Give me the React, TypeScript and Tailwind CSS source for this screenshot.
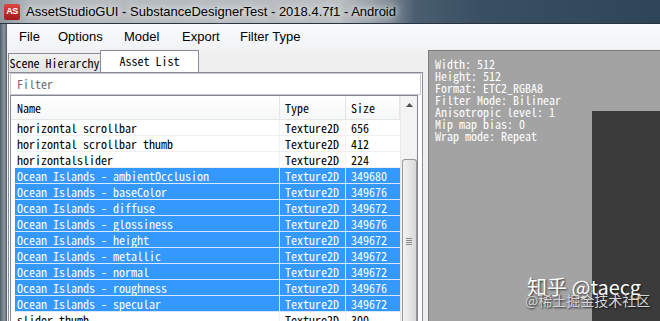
import React from "react";

const rows = [
  { n: "horizontal scrollbar", t: "Texture2D", s: "656", sel: false },
  { n: "horizontal scrollbar thumb", t: "Texture2D", s: "412", sel: false },
  { n: "horizontalslider", t: "Texture2D", s: "224", sel: false },
  { n: "Ocean Islands - ambientOcclusion", t: "Texture2D", s: "349680", sel: true },
  { n: "Ocean Islands - baseColor", t: "Texture2D", s: "349676", sel: true },
  { n: "Ocean Islands - diffuse", t: "Texture2D", s: "349672", sel: true },
  { n: "Ocean Islands - glossiness", t: "Texture2D", s: "349676", sel: true },
  { n: "Ocean Islands - height", t: "Texture2D", s: "349672", sel: true },
  { n: "Ocean Islands - metallic", t: "Texture2D", s: "349672", sel: true },
  { n: "Ocean Islands - normal", t: "Texture2D", s: "349672", sel: true },
  { n: "Ocean Islands - roughness", t: "Texture2D", s: "349676", sel: true },
  { n: "Ocean Islands - specular", t: "Texture2D", s: "349672", sel: true },
  { n: "slider thumb", t: "Texture2D", s: "300", sel: false },
];

const info = [
  "Width: 512",
  "Height: 512",
  "Format: ETC2_RGBA8",
  "Filter Mode: Bilinear",
  "Anisotropic level: 1",
  "Mip map bias: 0",
  "Wrap mode: Repeat",
];

const mono = "font-['Noto_Sans_Mono_CJK_SC','Liberation_Mono',monospace] text-[12px] whitespace-pre";

function Row({ n, t, s, sel }: { n: string; t: string; s: string; sel: boolean }) {
  const cell = sel
    ? "bg-[#3399ff] border-[#d4e7fb] text-white"
    : "bg-white border-[#f0f0f0] text-black";
  return (
    <div className="flex h-[16px] shrink-0">
      <div className="w-[4px] shrink-0 bg-white" />
      <div className={`w-[265px] shrink-0 pl-[2px] border-r border-b leading-[15px] overflow-hidden ${cell}`}>{n}</div>
      <div className={`w-[66px] shrink-0 pl-[5px] border-r border-b leading-[15px] ${cell}`}>{t}</div>
      <div className={`w-[54px] shrink-0 pl-[5px] border-b leading-[15px] ${cell}`}>{s}</div>
    </div>
  );
}

export default function App() {
  return (
    <div className="relative w-[660px] h-[321px] overflow-hidden flex flex-col bg-[#f0f0f0] font-['Liberation_Sans',Arial,sans-serif]">
      {/* Title bar */}
      <div className="h-[24px] shrink-0 flex items-center border-b border-[#27333f] bg-[linear-gradient(to_right,#8f979f_0px,#b3b8bd_30px,#babec2_340px,#8a949e_385px,#4a5e70_415px,#3a4f61_480px,#2f4557_660px)]">
        <div className="ml-[4px] w-[16px] h-[16px] rounded-[2px] bg-[linear-gradient(to_bottom,#e0453f,#a3181c)] flex items-center justify-center text-white text-[9px] font-bold leading-none tracking-[-0.5px]">
          AS
        </div>
        <div className="ml-[6px] text-[13px] text-black leading-none [text-shadow:0_0_6px_#ffffff,0_0_10px_#e6e8ea]">
          AssetStudioGUI - SubstanceDesignerTest - 2018.4.7f1 - Android
        </div>
      </div>

      <div className="flex flex-1 min-h-0">
        {/* left window frame */}
        <div className="w-[7px] shrink-0 bg-[linear-gradient(to_right,#4f5a65_0px,#6f7a85_2px,#8c96a0_4px,#6a747e_6px,#4a545e_7px)]" />

        {/* client */}
        <div className="flex-1 flex flex-col min-w-0">
          {/* Menu bar */}
          <div className="h-[25px] shrink-0 flex items-center bg-[linear-gradient(to_bottom,#f9fafb,#f1f3f5)] text-[13px] text-black pl-[12px]">
            <span className="w-[39px]">File</span>
            <span className="w-[66px]">Options</span>
            <span className="w-[58px]">Model</span>
            <span className="w-[58px]">Export</span>
            <span>Filter Type</span>
          </div>

          {/* Body */}
          <div className="flex flex-1 min-h-0">
            {/* Tab control */}
            <div className="ml-[1px] w-[415px] shrink-0 flex flex-col">
              <div className="h-[23px] shrink-0 flex items-end">
                <div className={`h-[19px] w-[93px] border border-b-0 border-[#898c95] bg-[linear-gradient(to_bottom,#f2f2f2,#e3e3e3)] flex items-center justify-center text-black ${mono}`}>
                  Scene Hierarchy
                </div>
                <div className={`h-[22px] w-[99px] -ml-[1px] border border-b-0 border-[#898c95] bg-white flex items-center justify-center pb-[2px] text-black ${mono}`}>
                  Asset List
                </div>
              </div>
              <div className="flex-1 min-h-0 border border-b-0 border-[#898c95] bg-white px-[1px] flex flex-col">
                {/* Filter box */}
                <div className={`h-[22px] shrink-0 border border-[#c5c7cc] flex items-center pl-[6px] text-[#6d6d6d] ${mono}`}>
                  Filter
                </div>
                {/* List view */}
                <div className={`w-[408px] flex-1 min-h-0 border border-b-0 border-[#828790] flex ${mono}`}>
                  <div className="w-[389px] shrink-0 flex flex-col">
                    <div className="h-[24px] shrink-0 flex bg-[linear-gradient(to_bottom,#ffffff,#f6f7f8)] border-b border-[#e5e5e5] text-black">
                      <div className="w-[4px] shrink-0" />
                      <div className="w-[265px] shrink-0 pl-[2px] border-r border-[#e5e5e5] leading-[23px]">Name</div>
                      <div className="w-[66px] shrink-0 pl-[5px] border-r border-[#e5e5e5] leading-[23px]">Type</div>
                      <div className="w-[54px] shrink-0 pl-[5px] border-r border-[#e5e5e5] leading-[23px]">Size</div>
                    </div>
                    {rows.map((r) => (
                      <Row key={r.n} {...r} />
                    ))}
                  </div>
                  {/* Scrollbar */}
                  <div className="w-[17px] shrink-0 bg-[#f3f3f3] border-l border-[#e9e9e9] flex flex-col items-center">
                    <div className="h-[17px] shrink-0 w-full flex items-center justify-center pt-[1px]">
                      <svg width="7" height="4" viewBox="0 0 7 4">
                        <path d="M0 4 L3.5 0 L7 4 Z" fill="#4d4d4d" />
                      </svg>
                    </div>
                    <div className="h-[46px] shrink-0" />
                    <div className="w-[15px] flex-1 rounded-t-[3px] border border-b-0 border-[#979797] bg-[linear-gradient(to_right,#f2f2f2,#e6e6e6_50%,#d8d8d8)] flex flex-col items-center pt-[78px]">
                      <div className="w-[6px] h-[1px] bg-[#8a8a8a]" />
                      <div className="w-[6px] h-[1px] bg-[#8a8a8a] mt-[1px]" />
                      <div className="w-[6px] h-[1px] bg-[#8a8a8a] mt-[1px]" />
                      <div className="w-[6px] h-[1px] bg-[#8a8a8a] mt-[1px]" />
                    </div>
                  </div>
                </div>
              </div>
            </div>

            {/* Right preview panel */}
            <div className="ml-[5px] mt-[1px] flex-1 min-w-0 border-l border-t border-[#7c7c7c] bg-[#a3a3a3] relative pt-[7px] pl-[6px]">
              <div className={`text-white leading-[12px] ${mono}`}>
                {info.map((l) => (
                  <div key={l}>{l}</div>
                ))}
              </div>
              <div className="absolute left-[163px] top-[60px] right-0 bottom-0 bg-[#3b3b3b]" />
            </div>
          </div>
        </div>
      </div>

      {/* Watermark */}
      <div className="absolute left-[527px] top-[276px] text-white text-[20px] leading-[22px] font-['Noto_Sans_CJK_SC','Noto_Sans',sans-serif] [text-shadow:1px_1px_2px_rgba(0,0,0,0.7)] whitespace-nowrap">
        知乎 @taecg
      </div>
      <div className="absolute left-[525px] top-[292px] text-[#d6d6d6] text-[14px] leading-[16px] font-['Noto_Sans_CJK_SC',sans-serif] [text-shadow:1px_1px_2px_rgba(0,0,0,0.8)] whitespace-nowrap">
        @稀土掘金技术社区
      </div>
    </div>
  );
}
